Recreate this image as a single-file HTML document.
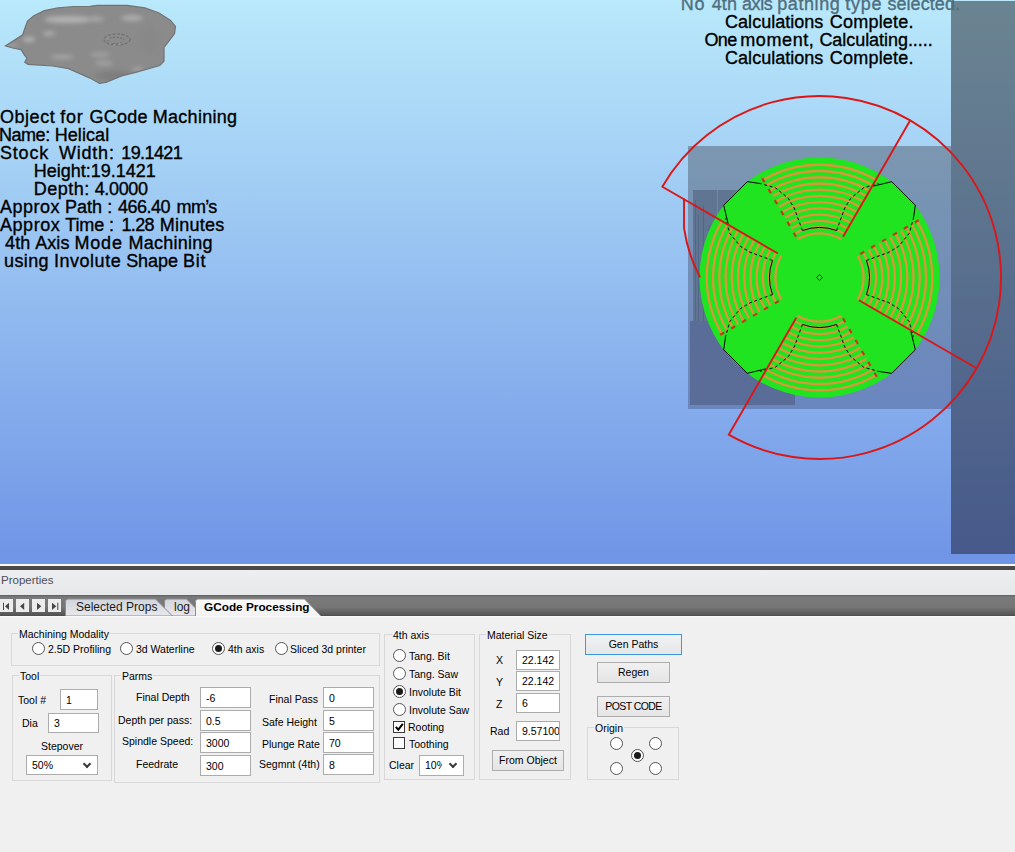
<!DOCTYPE html>
<html><head><meta charset="utf-8">
<style>
html,body{margin:0;padding:0;width:1015px;height:852px;overflow:hidden;background:#f0f0f0;font-family:"Liberation Sans",sans-serif;}
.a{position:absolute;white-space:pre;}
#vp{position:absolute;left:0;top:0;width:1015px;height:564px;background:linear-gradient(#b9e9fb 0%,#7094e6 100%);overflow:hidden;}
.gl{font-size:18px;line-height:18px;color:#000;-webkit-text-stroke:0.35px currentColor;}
#strip1{position:absolute;left:0;top:564px;width:1015px;height:2px;background:#fafafa;}
#strip2{position:absolute;left:0;top:566px;width:1015px;height:4px;background:#4c4848;}
#props{position:absolute;left:0;top:570px;width:1015px;height:25px;background:linear-gradient(#eceef0,#e6e8ea);}
#tabs{position:absolute;left:0;top:595px;width:1015px;height:21px;background:linear-gradient(#5e5e5e 0px,#7a7a7a 2px,#767676 12px,#555 20px,#4a4a4a 21px);}
#content{position:absolute;left:0;top:616px;width:1015px;height:236px;background:linear-gradient(#fafafa 0px,#fafafa 1px,#f0f0f0 1px);}
.f{font-size:10.5px;line-height:12px;color:#000;}
.grp{position:absolute;border:1px solid #d8d8d8;box-sizing:border-box;}
.tb{position:absolute;background:#fff;border:1px solid #acacac;box-sizing:border-box;font-size:10.5px;line-height:12px;padding-left:5px;overflow:hidden;white-space:pre;}
.btn{position:absolute;box-sizing:border-box;border:1px solid #adadad;background:linear-gradient(#f0f0f0,#e5e5e5);font-size:10.5px;text-align:center;}
.rb{position:absolute;width:13px;height:13px;box-sizing:border-box;border:1px solid #555;border-radius:50%;background:#fff;}
.rb.on::after{content:"";position:absolute;left:2px;top:2px;width:7px;height:7px;border-radius:50%;background:#1a1a1a;}
.cb{position:absolute;width:12px;height:12px;box-sizing:border-box;border:1px solid #3a3a3a;background:#fdfdfd;}
.nav{position:absolute;top:4px;width:13px;height:13px;background:#ececec;}
.lbl{background:#f0f0f0;padding:0 1px;}
.dd{position:absolute;box-sizing:border-box;border:1px solid #acacac;background:#fff;font-size:10.5px;line-height:18px;padding-left:5px;}
.dd::after{content:"";position:absolute;right:7px;top:5px;width:4px;height:4px;border-right:2px solid #3a3a3a;border-bottom:2px solid #3a3a3a;transform:rotate(45deg);}
</style></head><body>
<div id="vp">
<svg width="1015" height="564" style="position:absolute;left:0;top:0">
<defs>
<linearGradient id="gOuter" x1="0" y1="0" x2="0" y2="1"><stop offset="0" stop-color="#7b97b0"/><stop offset="1" stop-color="#6a86bf"/></linearGradient>
<linearGradient id="gPanel" x1="0" y1="0" x2="0" y2="1"><stop offset="0" stop-color="#6b8491"/><stop offset="1" stop-color="#46598a"/></linearGradient>
<linearGradient id="gHead" x1="0" y1="0" x2="0" y2="1"><stop offset="0" stop-color="#8c8c8c"/><stop offset="0.5" stop-color="#9a9a9a"/><stop offset="1" stop-color="#808080"/></linearGradient>
</defs>
<g id="head">
<defs><filter id="hb" x="-50%" y="-50%" width="200%" height="200%"><feGaussianBlur stdDeviation="2.2"/></filter>
<clipPath id="hc"><path id="hp" d="M5.3,45.9L22.7,34.8L24.8,28.5L27.5,21.1L33.8,15.8L44.4,10.6L58,7.9L73.9,6.5L90,6.3L97.4,5.3L127,5.3L144.9,7.9L158.6,12.7L170.3,20.1L175.5,26.4L174.5,33.8L168.1,42.2L164,47.5L164,61.2L159.7,65.5L137.5,71.8L121.7,76L105.8,82.4L99.5,83.4L90,78.1L68.6,68.6L52.8,66L28,64.4L24.8,62.3L26.9,58.1L24.3,54.9L21.1,49.6L12.7,48Z"/></clipPath></defs>
<g clip-path="url(#hc)">
<rect x="0" y="0" width="180" height="90" fill="#8b8b8b"/>
<g filter="url(#hb)">
<ellipse cx="68" cy="19.5" rx="24" ry="3.5" fill="#b2b2b2"/>
<ellipse cx="96" cy="19" rx="8" ry="2.5" fill="#a8a8a8"/>
<ellipse cx="132" cy="18" rx="11" ry="3" fill="#acacac"/>
<ellipse cx="49" cy="33.5" rx="6" ry="2" fill="#b0b0b0"/>
<ellipse cx="29" cy="39.5" rx="6" ry="2.5" fill="#b4b4b4"/>
<ellipse cx="12" cy="45.5" rx="6" ry="1.5" fill="#a8a8a8"/>
<ellipse cx="62" cy="57" rx="12" ry="2.2" fill="#a6a6a6"/>
<ellipse cx="100" cy="54.5" rx="10" ry="2.5" fill="#a0a0a0"/>
<ellipse cx="104" cy="63" rx="9" ry="2.5" fill="#a2a2a2"/>
<ellipse cx="138" cy="69" rx="6" ry="2" fill="#a8a0a6"/>
<ellipse cx="150" cy="40" rx="10" ry="14" fill="#888888"/>
<ellipse cx="115" cy="76" rx="20" ry="5" fill="#7e7e7e"/>

</g>
<g fill="none" stroke="#6c6c6c" stroke-width="1.1" opacity="0.85">
<ellipse cx="117" cy="39.5" rx="13" ry="5.5" stroke-dasharray="3,1.5"/>
<ellipse cx="116" cy="40.5" rx="8" ry="3.2" stroke-dasharray="2,1.5"/>
</g>
<g fill="#b8b8b8" opacity="0.7"><circle cx="110" cy="43" r="0.8"/><circle cx="114" cy="45" r="0.8"/><circle cx="120" cy="44" r="0.8"/><circle cx="124" cy="41" r="0.7"/><circle cx="108" cy="39" r="0.7"/></g>
</g>
<use href="#hp" fill="none" stroke="#737373" stroke-width="1.2"/>
</g>
<rect x="688" y="146" width="270" height="263" fill="url(#gOuter)"/>
<rect x="693" y="190" width="102" height="131" fill="#5f7591"/><path d="M695.5,200V321M698.5,215V321M703.5,205V321M709,225V321" stroke="#52678a" stroke-width="1"/><path d="M717.5,190V321" stroke="#7088a4" stroke-width="1"/>
<rect x="690" y="321" width="105" height="84" fill="#596d98"/>
<rect x="951" y="1" width="64" height="553" fill="url(#gPanel)"/>
<circle cx="819.5" cy="277.5" r="120" fill="#20e41f"/>
<path d="M797.45,239.31A44.10,44.10 0 0 1 841.55,239.31M857.69,255.45A44.10,44.10 0 0 1 857.69,299.55M841.55,315.69A44.10,44.10 0 0 1 797.45,315.69M781.31,299.55A44.10,44.10 0 0 1 781.31,255.45M794.33,233.90A50.34,50.34 0 0 1 844.67,233.90M863.10,252.33A50.34,50.34 0 0 1 863.10,302.67M844.67,321.10A50.34,50.34 0 0 1 794.33,321.10M775.90,302.67A50.34,50.34 0 0 1 775.90,252.33M791.21,228.50A56.58,56.58 0 0 1 847.79,228.50M868.50,249.21A56.58,56.58 0 0 1 868.50,305.79M847.79,326.50A56.58,56.58 0 0 1 791.21,326.50M770.50,305.79A56.58,56.58 0 0 1 770.50,249.21M788.09,223.10A62.82,62.82 0 0 1 850.91,223.10M873.90,246.09A62.82,62.82 0 0 1 873.90,308.91M850.91,331.90A62.82,62.82 0 0 1 788.09,331.90M765.10,308.91A62.82,62.82 0 0 1 765.10,246.09M784.97,217.69A69.06,69.06 0 0 1 854.03,217.69M879.31,242.97A69.06,69.06 0 0 1 879.31,312.03M854.03,337.31A69.06,69.06 0 0 1 784.97,337.31M759.69,312.03A69.06,69.06 0 0 1 759.69,242.97M781.85,212.29A75.30,75.30 0 0 1 857.15,212.29M884.71,239.85A75.30,75.30 0 0 1 884.71,315.15M857.15,342.71A75.30,75.30 0 0 1 781.85,342.71M754.29,315.15A75.30,75.30 0 0 1 754.29,239.85M778.73,206.88A81.54,81.54 0 0 1 860.27,206.88M890.12,236.73A81.54,81.54 0 0 1 890.12,318.27M860.27,348.12A81.54,81.54 0 0 1 778.73,348.12M748.88,318.27A81.54,81.54 0 0 1 748.88,236.73M775.61,201.48A87.78,87.78 0 0 1 863.39,201.48M895.52,233.61A87.78,87.78 0 0 1 895.52,321.39M863.39,353.52A87.78,87.78 0 0 1 775.61,353.52M743.48,321.39A87.78,87.78 0 0 1 743.48,233.61M772.49,196.08A94.02,94.02 0 0 1 866.51,196.08M900.92,230.49A94.02,94.02 0 0 1 900.92,324.51M866.51,358.92A94.02,94.02 0 0 1 772.49,358.92M738.08,324.51A94.02,94.02 0 0 1 738.08,230.49M769.37,190.67A100.26,100.26 0 0 1 869.63,190.67M906.33,227.37A100.26,100.26 0 0 1 906.33,327.63M869.63,364.33A100.26,100.26 0 0 1 769.37,364.33M732.67,327.63A100.26,100.26 0 0 1 732.67,227.37M766.25,185.27A106.50,106.50 0 0 1 872.75,185.27M911.73,224.25A106.50,106.50 0 0 1 911.73,330.75M872.75,369.73A106.50,106.50 0 0 1 766.25,369.73M727.27,330.75A106.50,106.50 0 0 1 727.27,224.25M763.13,179.86A112.74,112.74 0 0 1 875.87,179.86M917.14,221.13A112.74,112.74 0 0 1 917.14,333.87M875.87,375.14A112.74,112.74 0 0 1 763.13,375.14M721.86,333.87A112.74,112.74 0 0 1 721.86,221.13" fill="none" stroke="#dc963a" stroke-width="2.3"/>
<path d="M802.40,230.52A50,50 0 0 1 836.60,230.52M760.35,183.57L747.28,181.66L723.66,205.28L728.17,223.70M866.48,260.40A50,50 0 0 1 866.48,294.60M913.43,218.35L915.34,205.28L891.72,181.66L873.30,186.17M836.60,324.48A50,50 0 0 1 802.40,324.48M878.65,371.43L891.72,373.34L915.34,349.72L910.83,331.30M772.52,294.60A50,50 0 0 1 772.52,260.40M725.57,336.65L723.66,349.72L747.28,373.34L765.70,368.83" fill="none" stroke="#000" stroke-width="1"/>
<path d="M802.40,230.52L794.19,207.96L788.35,198.41L775.35,187.77L760.35,183.57M772.52,260.40L749.96,252.19L740.41,246.35L729.77,233.35L725.57,218.35M866.48,260.40L889.04,252.19L898.59,246.35L909.23,233.35L913.43,218.35M836.60,230.52L844.81,207.96L850.65,198.41L863.65,187.77L878.65,183.57M836.60,324.48L844.81,347.04L850.65,356.59L863.65,367.23L878.65,371.43M866.48,294.60L889.04,302.81L898.59,308.65L909.23,321.65L913.43,336.65M772.52,294.60L749.96,302.81L740.41,308.65L729.77,321.65L725.57,336.65M802.40,324.48L794.19,347.04L788.35,356.59L775.35,367.23L760.35,371.43" fill="none" stroke="#000" stroke-width="1" stroke-dasharray="3,2.5"/>
<path d="M796.00,236.80L762.00,177.91M860.20,254.00L919.09,220.00M843.00,318.20L877.00,377.09M778.80,301.00L719.91,335.00" fill="none" stroke="#c03a18" stroke-width="2.2" stroke-dasharray="4.6,8"/>
<path d="M816.5,277.5L819.5,274.5L822.5,277.5L819.5,280.5Z" fill="none" stroke="#000" stroke-width="0.8"/>
<path d="M777.93,253.50L662.32,186.75A181.5,181.5 0 1 1 728.75,434.68L796.25,317.77M843.00,236.80L910.25,120.32M858.90,300.25L976.68,368.25M684,198.3L684,228Q688,255 700.1,277.2" fill="none" stroke="#dc1616" stroke-width="1.9" stroke-linejoin="round"/>
</svg>
<div class="a gl" style="left:0px;top:108.1px;letter-spacing:0.53px">Object</div>
<div class="a gl" style="left:60.2px;top:108.1px;letter-spacing:0.80px">for</div>
<div class="a gl" style="left:89.6px;top:108.1px;letter-spacing:0.21px">GCode</div>
<div class="a gl" style="left:152.7px;top:108.1px;letter-spacing:0.30px">Machining</div>
<div class="a gl" style="left:-1px;top:126.1px;letter-spacing:-0.46px">Name:</div>
<div class="a gl" style="left:54.7px;top:126.1px;letter-spacing:0.08px">Helical</div>
<div class="a gl" style="left:0px;top:144.1px;letter-spacing:0.80px">Stock</div>
<div class="a gl" style="left:58.9px;top:144.1px;letter-spacing:0.80px">Width:</div>
<div class="a gl" style="left:121.3px;top:144.1px;letter-spacing:-0.60px">19.1421</div>
<div class="a gl" style="left:33.8px;top:162.1px;letter-spacing:-0.01px">Height:19.1421</div>
<div class="a gl" style="left:33.8px;top:180.1px;letter-spacing:0.48px">Depth:</div>
<div class="a gl" style="left:94.7px;top:180.1px;letter-spacing:-0.35px">4.0000</div>
<div class="a gl" style="left:0px;top:198.1px;letter-spacing:0.48px">Approx</div>
<div class="a gl" style="left:64.9px;top:198.1px;letter-spacing:0.07px">Path</div>
<div class="a gl" style="left:107.2px;top:198.1px;letter-spacing:0.00px">:</div>
<div class="a gl" style="left:117.9px;top:198.1px;letter-spacing:-0.51px">466.40</div>
<div class="a gl" style="left:176.5px;top:198.1px;letter-spacing:-0.60px">mm’s</div>
<div class="a gl" style="left:0px;top:216.1px;letter-spacing:0.54px">Approx</div>
<div class="a gl" style="left:65.3px;top:216.1px;letter-spacing:-0.13px">Time</div>
<div class="a gl" style="left:109.1px;top:216.1px;letter-spacing:0.00px">:</div>
<div class="a gl" style="left:121.4px;top:216.1px;letter-spacing:-0.60px">1.28</div>
<div class="a gl" style="left:159.8px;top:216.1px;letter-spacing:0.23px">Minutes</div>
<div class="a gl" style="left:5.1px;top:234.1px;letter-spacing:0.03px">4th</div>
<div class="a gl" style="left:35.2px;top:234.1px;letter-spacing:0.07px">Axis</div>
<div class="a gl" style="left:74.5px;top:234.1px;letter-spacing:0.80px">Mode</div>
<div class="a gl" style="left:128.4px;top:234.1px;letter-spacing:0.25px">Machining</div>
<div class="a gl" style="left:4.1px;top:252.1px;letter-spacing:0.37px">using</div>
<div class="a gl" style="left:54px;top:252.1px;letter-spacing:0.52px">Involute</div>
<div class="a gl" style="left:126.2px;top:252.1px;letter-spacing:-0.07px">Shape</div>
<div class="a gl" style="left:182.9px;top:252.1px;letter-spacing:0.80px">Bit</div>
<div class="a gl" style="left:680.8px;top:-4.7px;letter-spacing:0.80px;color:#4f6e7e">No</div>
<div class="a gl" style="left:711.8px;top:-4.7px;letter-spacing:0.06px;color:#4f6e7e">4th</div>
<div class="a gl" style="left:742px;top:-4.7px;letter-spacing:-0.43px;color:#4f6e7e">axis</div>
<div class="a gl" style="left:777.3px;top:-4.7px;letter-spacing:0.56px;color:#4f6e7e">pathing</div>
<div class="a gl" style="left:845.3px;top:-4.7px;letter-spacing:0.77px;color:#4f6e7e">type</div>
<div class="a gl" style="left:887.4px;top:-4.7px;letter-spacing:0.07px;color:#4f6e7e">selected.</div>
<div class="a gl" style="left:725.1px;top:13.0px;letter-spacing:0.01px">Calculations</div>
<div class="a gl" style="left:829.8px;top:13.0px;letter-spacing:0.21px">Complete.</div>
<div class="a gl" style="left:704.4px;top:30.7px;letter-spacing:-0.60px">One</div>
<div class="a gl" style="left:740.3px;top:30.7px;letter-spacing:0.58px">moment,</div>
<div class="a gl" style="left:819.4px;top:30.7px;letter-spacing:-0.05px">Calculating.....</div>
<div class="a gl" style="left:725.1px;top:48.5px;letter-spacing:0.01px">Calculations</div>
<div class="a gl" style="left:829.8px;top:48.5px;letter-spacing:0.21px">Complete.</div>

</div>
<div id="strip1"></div><div id="strip2"></div>
<div id="props"><div class="a" style="left:1px;top:4px;font-size:11.5px;color:#4c4c55;">Properties</div></div>
<div id="tabs">
<div class="nav" style="left:0px"><svg width="13" height="13"><path d="M3.5,2.7V10" stroke="#474747" stroke-width="1"/><path d="M9,2.7L5,6.3L9,10Z" fill="#474747"/></svg></div>
<div class="nav" style="left:16px"><svg width="13" height="13"><path d="M8.2,2.7L4,6.3L8.2,10Z" fill="#474747"/></svg></div>
<div class="nav" style="left:32px"><svg width="13" height="13"><path d="M5,2.7L9.3,6.3L5,10Z" fill="#474747"/></svg></div>
<div class="nav" style="left:48px"><svg width="13" height="13"><path d="M4,2.7L8.3,6.3L4,10Z" fill="#474747"/><path d="M9.8,2.7V10" stroke="#474747" stroke-width="1"/></svg></div>
<svg width="330" height="21" style="position:absolute;left:0;top:0">
<defs>
<linearGradient id="tg1" x1="0" y1="0" x2="0" y2="1"><stop offset="0" stop-color="#d0d4dc"/><stop offset="1" stop-color="#e8e8ec"/></linearGradient>
<linearGradient id="tg2" x1="0" y1="0" x2="0" y2="1"><stop offset="0" stop-color="#fbfbfb"/><stop offset="1" stop-color="#f2f2f2"/></linearGradient>
</defs>
<path d="M164.5,21V6.5Q164.5,4 167,4H186.5L203.5,21Z" fill="url(#tg1)" stroke="#8c8c8c" stroke-width="1"/>
<path d="M65.5,21V6.5Q65.5,4 68,4H155.5L172.5,21Z" fill="url(#tg1)" stroke="#8c8c8c" stroke-width="1"/>
<path d="M195.5,21.5V6.5Q195.5,4 198,4H304.5L321.5,21.5Z" fill="url(#tg2)" stroke="#8c8c8c" stroke-width="1"/>
</svg>
<div class="a" style="left:76px;top:5px;font-size:12px;color:#1a1a1a;">Selected Props</div>
<div class="a" style="left:174px;top:5px;font-size:12px;color:#1a1a1a;">log</div>
<div class="a" style="left:204px;top:5px;font-size:11.8px;font-weight:bold;color:#000;">GCode Processing</div>
</div>
<div id="content">
<!-- Machining Modality -->
<div class="grp" style="left:11px;top:17px;width:369px;height:33px;"></div>
<div class="a f lbl" style="left:18px;top:12px;">Machining Modality</div>
<div class="rb" style="left:32px;top:26px;"></div><div class="a f" style="left:48px;top:27px;">2.5D Profiling</div>
<div class="rb" style="left:120px;top:26px;"></div><div class="a f" style="left:136px;top:27px;">3d Waterline</div>
<div class="rb on" style="left:212px;top:26px;"></div><div class="a f" style="left:228px;top:27px;">4th axis</div>
<div class="rb" style="left:275px;top:26px;"></div><div class="a f" style="left:290px;top:27px;">Sliced 3d printer</div>
<!-- Tool -->
<div class="grp" style="left:12px;top:59px;width:100px;height:106px;"></div>
<div class="a f lbl" style="left:19px;top:54px;">Tool</div>
<div class="a f" style="left:18px;top:78px;">Tool #</div>
<div class="tb" style="left:60px;top:73px;width:38px;height:21px;padding-top:4px;">1</div>
<div class="a f" style="left:22px;top:101px;">Dia</div>
<div class="tb" style="left:48px;top:97px;width:51px;height:20px;padding-top:3px;">3</div>
<div class="a f" style="left:41px;top:124px;">Stepover</div>
<div class="dd" style="left:26px;top:139px;width:72px;height:20px;">50%</div>
<!-- Parms -->
<div class="grp" style="left:114px;top:59px;width:266px;height:108px;"></div>
<div class="a f lbl" style="left:121px;top:54px;">Parms</div>
<div class="a f" style="left:136px;top:75px;">Final Depth</div>
<div class="a f" style="left:118px;top:98px;">Depth per pass:</div>
<div class="a f" style="left:122px;top:119px;">Spindle Speed:</div>
<div class="a f" style="left:136px;top:142px;">Feedrate</div>
<div class="tb" style="left:200px;top:71px;width:51px;height:21px;padding-top:4px;">-6</div>
<div class="tb" style="left:200px;top:94px;width:51px;height:21px;padding-top:4px;">0.5</div>
<div class="tb" style="left:200px;top:116px;width:51px;height:21px;padding-top:4px;">3000</div>
<div class="tb" style="left:200px;top:139px;width:51px;height:21px;padding-top:4px;">300</div>
<div class="a f" style="left:269px;top:77px;">Final Pass</div>
<div class="a f" style="left:262px;top:100px;">Safe Height</div>
<div class="a f" style="left:262px;top:122px;">Plunge Rate</div>
<div class="a f" style="left:259px;top:142px;">Segmnt (4th)</div>
<div class="tb" style="left:323px;top:71px;width:51px;height:21px;padding-top:4px;">0</div>
<div class="tb" style="left:323px;top:94px;width:51px;height:21px;padding-top:4px;">5</div>
<div class="tb" style="left:323px;top:116px;width:51px;height:21px;padding-top:4px;">70</div>
<div class="tb" style="left:323px;top:138px;width:51px;height:21px;padding-top:4px;">8</div>
<!-- 4th axis -->
<div class="grp" style="left:384px;top:18px;width:91px;height:146px;"></div>
<div class="a f lbl" style="left:392px;top:13px;">4th axis</div>
<div class="rb" style="left:393px;top:33px;"></div><div class="a f" style="left:409px;top:34px;">Tang. Bit</div>
<div class="rb" style="left:393px;top:51px;"></div><div class="a f" style="left:409px;top:52px;">Tang. Saw</div>
<div class="rb on" style="left:393px;top:69px;"></div><div class="a f" style="left:409px;top:70px;">Involute Bit</div>
<div class="rb" style="left:393px;top:87px;"></div><div class="a f" style="left:409px;top:88px;">Involute Saw</div>
<div class="cb" style="left:393px;top:105px;"><svg width="10" height="10" style="position:absolute;left:0;top:0"><path d="M1.8,4.8L4.3,7.6L8.8,1.8" fill="none" stroke="#000" stroke-width="2"/></svg></div><div class="a f" style="left:408px;top:105px;">Rooting</div>
<div class="cb" style="left:393px;top:121px;"></div><div class="a f" style="left:409px;top:122px;">Toothing</div>
<div class="a f" style="left:389px;top:143px;">Clear</div>
<div class="dd" style="left:419px;top:139px;width:45px;height:21px;"><span style="display:inline-block;width:17px;overflow:hidden;vertical-align:top">10%</span></div>
<!-- Material Size -->
<div class="grp" style="left:479px;top:18px;width:92px;height:146px;"></div>
<div class="a f lbl" style="left:486px;top:13px;">Material Size</div>
<div class="a f" style="left:496px;top:38px;">X</div>
<div class="a f" style="left:496px;top:60px;">Y</div>
<div class="a f" style="left:496px;top:82px;">Z</div>
<div class="a f" style="left:490px;top:109px;">Rad</div>
<div class="tb" style="left:516px;top:34px;width:44px;height:20px;padding-top:3px;">22.142</div>
<div class="tb" style="left:516px;top:55px;width:44px;height:20px;padding-top:3px;">22.142</div>
<div class="tb" style="left:516px;top:77px;width:44px;height:20px;padding-top:3px;">6</div>
<div class="tb" style="left:516px;top:105px;width:44px;height:20px;padding-top:3px;">9.57100</div>
<div class="btn" style="left:492px;top:134px;width:72px;height:21px;line-height:19px;">From Object</div>
<!-- buttons -->
<div class="btn" style="left:585px;top:18px;width:97px;height:21px;line-height:19px;border-color:#3c9ad8;background:linear-gradient(#f0f2f4,#e4e6e8);">Gen Paths</div>
<div class="btn" style="left:597px;top:46px;width:73px;height:21px;line-height:19px;">Regen</div>
<div class="btn" style="left:597px;top:80px;width:73px;height:21px;line-height:19px;" ><span style="letter-spacing:-0.6px">POST CODE</span></div>
<div class="grp" style="left:587px;top:111px;width:92px;height:53px;"></div>
<div class="a f lbl" style="left:594px;top:106px;">Origin</div>
<div class="rb" style="left:610px;top:121px;"></div>
<div class="rb" style="left:649px;top:121px;"></div>
<div class="rb on" style="left:631px;top:133px;"></div>
<div class="rb" style="left:610px;top:146px;"></div>
<div class="rb" style="left:649px;top:146px;"></div>
</div>

</body></html>
